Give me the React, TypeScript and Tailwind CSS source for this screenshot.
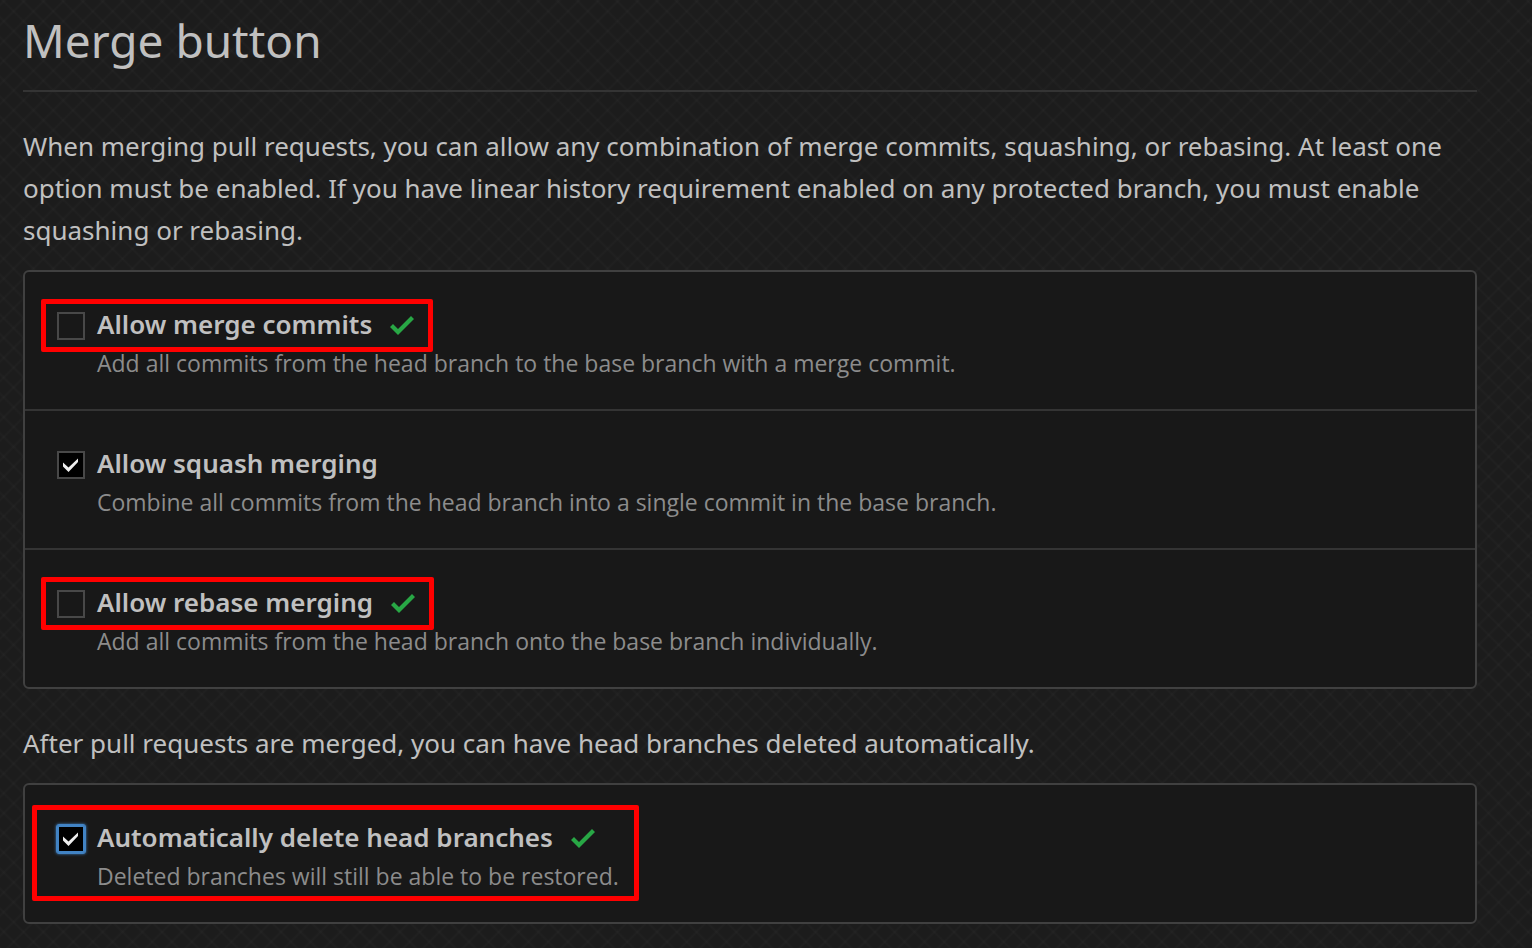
import { useState } from "react";

type MergeOption = {
  id: string;
  title: string;
  description: string;
  enabled: boolean;
  saved?: boolean;
  highlight?: "title" | "all";
  focused?: boolean;
};

const mergeOptions: MergeOption[] = [
  {
    id: "merge-commits",
    title: "Allow merge commits",
    description: "Add all commits from the head branch to the base branch with a merge commit.",
    enabled: false,
    saved: true,
    highlight: "title",
  },
  {
    id: "squash-merging",
    title: "Allow squash merging",
    description: "Combine all commits from the head branch into a single commit in the base branch.",
    enabled: true,
  },
  {
    id: "rebase-merging",
    title: "Allow rebase merging",
    description: "Add all commits from the head branch onto the base branch individually.",
    enabled: false,
    saved: true,
    highlight: "title",
  },
];

const branchOptions: MergeOption[] = [
  {
    id: "delete-branches",
    title: "Automatically delete head branches",
    description: "Deleted branches will still be able to be restored.",
    enabled: true,
    saved: true,
    highlight: "all",
    focused: true,
  },
];

function SavedIcon() {
  return (
    <svg className="ml-[18px] h-[19px] w-6 shrink-0" viewBox="0 0 24 19" aria-hidden="true">
      <path d="M24 3 8 19 0 11l3-3 5 5L21 0z" fill="#28a745" />
    </svg>
  );
}

function Checkbox({ option }: { option: MergeOption }) {
  const [checked, setChecked] = useState(option.enabled);
  return (
    <span className="relative mt-2 block size-7 shrink-0">
      <input
        id={option.id}
        type="checkbox"
        checked={checked}
        onChange={(event) => setChecked(event.target.checked)}
        className={
          option.focused
            ? "block size-7 appearance-none rounded-xs border-2 border-[#4183c4] bg-[#181818] shadow-[0_0_3px_1px_#4183c4] outline-1 outline-[#4183c4] checked:bg-black"
            : "block size-7 appearance-none border-2 border-[#484848] bg-[#181818] outline-none checked:bg-black"
        }
      />
      {checked && (
        <svg className="pointer-events-none absolute inset-0 size-7" viewBox="0 0 28 28" aria-hidden="true">
          <path d="M6 11.500 11.500 16.500 21 7.500V11L11.500 21 6 15.500z" fill="#eeeeee" />
        </svg>
      )}
    </span>
  );
}

function OptionRow({ option }: { option: MergeOption }) {
  return (
    <li className="flex px-8 pt-8 pb-[27px]">
      <div className="relative flex gap-3">
        <Checkbox option={option} />
        <div>
          <div className="flex h-[42px] items-center">
            <label htmlFor={option.id} className="pb-[2px] text-[26px] leading-10 font-semibold whitespace-nowrap">
              {option.title}
            </label>
            {option.saved && <SavedIcon />}
          </div>
          <p className="pb-[2px] font-['Open_Sans',sans-serif] text-[23px] leading-[34px] text-[#8c8c8c]">
            {option.description}
          </p>
        </div>
        {option.highlight === "all" && (
          <div className="pointer-events-none absolute -top-3 -right-5 -bottom-[6px] -left-[25px] rounded-xs border-5 border-[#ff0000]" />
        )}
        {option.highlight === "title" && (
          <div className="pointer-events-none absolute -top-[5px] -left-4 flex h-[53px] items-center rounded-xs border-5 border-[#ff0000] pr-[14px] pl-[51px]">
            <span className="invisible text-[26px] font-semibold whitespace-nowrap" aria-hidden="true">
              {option.title}
            </span>
            <span className="ml-[18px] w-6" />
          </div>
        )}
      </div>
    </li>
  );
}

function OptionList({ options }: { options: MergeOption[] }) {
  return (
    <ul className="mt-[19px] divide-y-2 divide-[#343434] rounded-md border-2 border-[#404040] bg-[#181818]">
      {options.map((option) => (
        <OptionRow key={option.id} option={option} />
      ))}
    </ul>
  );
}

export default function App() {
  return (
    <main className="min-h-screen bg-[#1c1c1c] bg-[repeating-linear-gradient(45deg,#ffffff05_0px,transparent_2px,transparent_12px,#ffffff05_14px),repeating-linear-gradient(-45deg,#ffffff05_0px,transparent_2px,transparent_12px,#ffffff05_14px)] pt-[7px] pr-[55px] pb-6 pl-[23px] font-['Noto_Sans',sans-serif] text-[#c0c0c0]">
      <h1 className="border-b-2 border-[#343434] pb-[17px] text-[46px] leading-[66px]">Merge button</h1>
      <p className="mt-[33px] text-[26px] leading-[42px]">
        When merging pull requests, you can allow any combination of merge commits, squashing, or rebasing. At least one
        option must be enabled. If you have linear history requirement enabled on any protected branch, you must enable
        squashing or rebasing.
      </p>
      <OptionList options={mergeOptions} />
      <p className="mt-[33px] text-[26px] leading-[42px]">
        After pull requests are merged, you can have head branches deleted automatically.
      </p>
      <OptionList options={branchOptions} />
    </main>
  );
}
